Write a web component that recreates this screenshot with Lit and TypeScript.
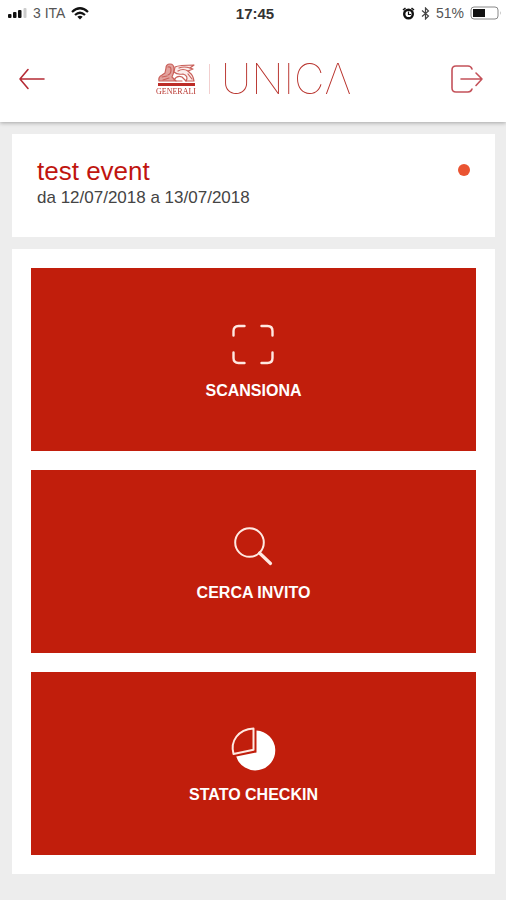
import { LitElement, html, css, svg } from "lit";
import { customElement, property } from "lit/decorators.js";

const icons = {
  scan: svg`<g fill="none" stroke="#ffe9e2" stroke-width="2.4" stroke-linecap="round">
    <path d="M1.500 12.500V8q0-5 5-5h6M29.500 3h6q5 0 5 5v4.500M40.500 29.500V35q0 5-5 5h-6M12.500 40h-6q-5 0-5-5v-5.500"/></g>`,
  search: svg`<g fill="none" stroke="#ffe9e2" stroke-linecap="round">
    <circle cx="17.500" cy="17.500" r="14.300" stroke-width="2"/>
    <path d="M27.500 28L38.500 38.500" stroke-width="3.200"/></g>`,
  pie: svg`<path d="M24.500 3.500A20 20 0 1 1 4.200 29.500L24.500 25.500Z" fill="#fff"/>
    <path d="M21.500 1.500V22.800L1.500 27C-2 14 6 2.500 21.500 1.500Z" fill="#c11e0c" stroke="#ffe9e2" stroke-width="2" stroke-linejoin="round"/>`,
};

@customElement("phone-status")
class PhoneStatus extends LitElement {
  static styles = css`
    :host {
      display: grid;
      grid-template-columns: 1fr auto 1fr;
      align-items: center;
      height: 26px;
      padding: 0 4px 0 8px;
      font-size: 14px;
      color: #555;
    }
    .group { display: flex; align-items: center; gap: 6px; }
    .end { justify-content: flex-end; }
    .time { font-size: 15px; font-weight: 700; color: #333; }
    svg { display: block; flex: none; }
  `;
  render() {
    return html`
      <div class="group">
        <svg width="19" height="12" viewBox="0 0 19 12" fill="#111">
          <rect x="0" y="7" width="3.500" height="4" rx="1"/><rect x="5" y="5" width="3.500" height="6" rx="1"/>
          <rect x="10" y="3" width="3.500" height="8" rx="1"/><rect x="15.500" y="1" width="3" height="10" rx="1" fill="#ccc"/>
        </svg>
        <span>3 ITA</span>
        <svg width="18" height="13" viewBox="0 0 18 13" fill="none" stroke="#111" stroke-width="2.200">
          <path d="M1 5Q9-2.500 17 5M4 8Q9 3.500 14 8"/><path d="M9 12.500L6.300 9.800Q9 7.800 11.700 9.800Z" fill="#111" stroke="none"/>
        </svg>
      </div>
      <span class="time">17:45</span>
      <div class="group end">
        <svg width="13" height="13" viewBox="0 0 13 13" fill="none" stroke="#111">
          <circle cx="6.500" cy="7" r="4.300" stroke-width="2.400"/><path d="M6.500 4.500V7.500H9" stroke-width="1.200"/>
          <path d="M1 3L3.500 1M12 3L9.500 1" stroke-width="1.600"/>
        </svg>
        <svg width="9" height="13" viewBox="0 0 9 13" fill="none" stroke="#444" stroke-width="1.200">
          <path d="M1 3.500L7.500 9L4.500 12V1L7.500 4L1 9.500"/>
        </svg>
        <span>51%</span>
        <svg width="32" height="14" viewBox="0 0 32 14">
          <rect x="1" y="1" width="27" height="12" rx="3" fill="#fff" stroke="#888"/>
          <rect x="3" y="3" width="12" height="8" fill="#111"/><path d="M30 5q1.500 2 0 4z" fill="#aaa"/>
        </svg>
      </div>`;
  }
}

@customElement("app-bar")
class AppBar extends LitElement {
  static styles = css`
    :host {
      display: flex;
      align-items: center;
      justify-content: space-between;
      height: 96px;
      padding: 10px 22px 0 18px;
      box-sizing: border-box;
    }
    button { display: block; padding: 0; border: 0; background: none; cursor: pointer; }
    svg { display: block; flex: none; }
    .brand { display: flex; align-items: center; padding-left: 12px; will-change: transform; }
    .mark { display: flex; flex-direction: column; align-items: center; width: 40px; }
    .company { font: 400 8px/9px "Liberation Serif", serif; color: #b8352f; }
    .rule { width: 1px; height: 30px; margin: 0 11px 0 13px; background: #f2cfcf; }
    .product { font: 100 42px/44px Inter, Lato, sans-serif; color: #b8322c; }
  `;
  render() {
    return html`
      <button aria-label="Indietro">
        <svg width="28" height="22" viewBox="0 0 28 22" fill="none" stroke="#b52b35" stroke-width="1.600" stroke-linecap="round" stroke-linejoin="round">
          <path d="M26 11H2M10 1.500L2 11L10 20.500"/>
        </svg>
      </button>
      <div class="brand">
        <div class="mark">
          <svg width="39" height="24" viewBox="0 0 39 24" fill="none" stroke="#c9605a" stroke-width="1.200" stroke-linecap="round" stroke-linejoin="round">
            <path d="M9 5Q9 1 13 1Q17 1 17 6Q17 10 15 14L19 18H2Q1 14 5 12L8 10Z" fill="#e3a39e"/>
            <path d="M11 4Q14 3 14 7T11 12M5 14L10 13M6 17L12 15"/>
            <path d="M18 4Q22 2 37 2L33 5L36 6L31 8L33 10Q36 12 37 18H29Q32 13 26 11Q20 12 17 9Z" fill="#fbeceb"/>
            <path d="M22 5Q27 3 33 5M21 8Q26 5 31 8M31 11L35 16"/>
            <path d="M17 17Q20 12 25 14L29 18M19 18H25"/>
            <rect x="1" y="20" width="37" height="3" fill="#bd2c27" stroke="none"/>
          </svg>
          <span class="company">GENERALI</span>
        </div>
        <div class="rule"></div>
        <span class="product" role="img" aria-label="UNICA">UNICΛ</span>
      </div>
      <button aria-label="Esci">
        <svg width="34" height="28" viewBox="0 0 34 28" fill="none" stroke="#c4525a" stroke-width="1.600" stroke-linecap="round" stroke-linejoin="round">
          <path d="M22 4Q21 1 18 1H6Q2 1 2 5V23Q2 27 6 27H18Q21 27 22 24M11 14H32M26 8L32 14L26 20.500"/>
        </svg>
      </button>`;
  }
}

@customElement("action-tile")
class ActionTile extends LitElement {
  @property() icon: keyof typeof icons = "scan";
  @property() label = "";
  static styles = css`
    :host { display: block; }
    button {
      display: flex;
      flex-direction: column;
      align-items: center;
      gap: 12px;
      width: 100%;
      height: 183px;
      padding: 55px 0 0;
      border: 0;
      background: #c11e0c;
      color: #fff;
      font: 700 16px/20px "Liberation Sans", Arial, sans-serif;
      cursor: pointer;
    }
    svg { display: block; overflow: visible; }
  `;
  render() {
    return html`<button>
      <svg width="44" height="46" viewBox="0 0 44 46" aria-hidden="true">${icons[this.icon]}</svg>
      <span>${this.label}</span>
    </button>`;
  }
}

@customElement("app-root")
class AppRoot extends LitElement {
  static styles = css`
    :host {
      display: block;
      min-height: 100vh;
      background: #ededed;
      font-family: "Liberation Sans", Arial, sans-serif;
    }
    header { background: #fff; box-shadow: 0 1px 4px rgba(0, 0, 0, 0.3); }
    main { display: flex; flex-direction: column; gap: 12px; padding: 12px 11px 12px 12px; }
    section { background: #fff; }
    .event {
      display: flex;
      justify-content: space-between;
      align-items: flex-start;
      padding: 22px 25px 28px 25px;
    }
    h1 { margin: 0; font-size: 26px; line-height: 30px; font-weight: 400; color: #c0150f; }
    p { margin: 0; font-size: 17px; line-height: 23px; color: #444; }
    .dot { width: 12px; height: 12px; margin-top: 8px; border-radius: 50%; background: #ea5432; }
    .actions { display: flex; flex-direction: column; gap: 19px; padding: 19px; }
  `;
  render() {
    return html`
      <header><phone-status></phone-status><app-bar></app-bar></header>
      <main>
        <section class="event">
          <div><h1>test event</h1><p>da 12/07/2018 a 13/07/2018</p></div>
          <span class="dot"></span>
        </section>
        <section class="actions">
          <action-tile icon="scan" label="SCANSIONA"></action-tile>
          <action-tile icon="search" label="CERCA INVITO"></action-tile>
          <action-tile icon="pie" label="STATO CHECKIN"></action-tile>
        </section>
      </main>`;
  }
}
